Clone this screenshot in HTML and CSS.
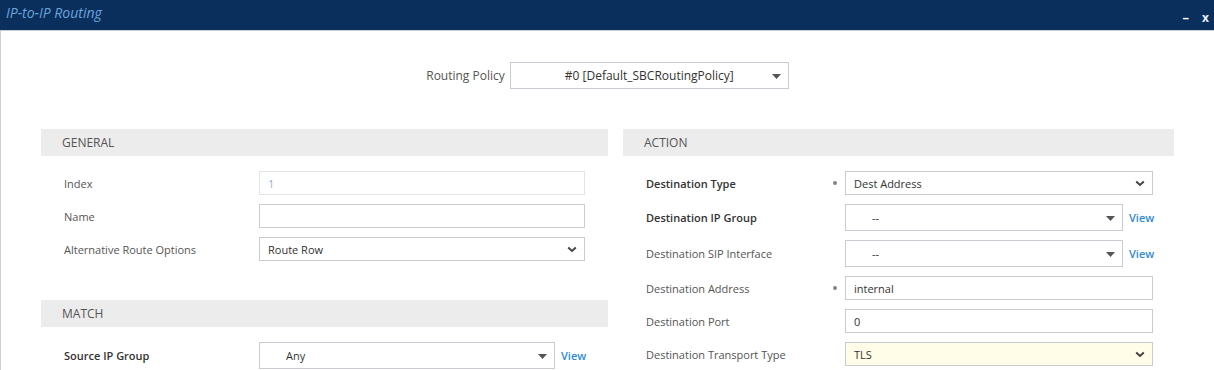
FILE: index.html
```html
<!DOCTYPE html>
<html lang="en">
<head>
  <meta charset="UTF-8" />
  <title>IP-to-IP Routing</title>
  <link rel="stylesheet" href="styles.css">
</head>
<body>

  <div class="titlebar">
    <span class="title">IP-to-IP Routing</span>
    <span class="win-btns"><span class="min">&ndash;</span><span class="close">x</span></span>
  </div>

  <div class="content">
    <div class="policy-row">
      <span class="policy-label">Routing Policy</span>
      <div class="field sel tri policy">
        <span class="val">#0 [Default_SBCRoutingPolicy]</span>
        <svg class="tri-ico" width="9" height="5" viewBox="0 0 9 5"><path d="M0 0h9L4.5 5z" fill="#555"/></svg>
      </div>
    </div>

    <div class="columns">
      <!-- levy sloupec -->
      <div class="col left">
        <div class="sec-head">GENERAL</div>
        <div class="rows">
          <div class="row">
            <span class="lbl">Index</span>
            <div class="field inp disabled w-full"><span class="val">1</span></div>
          </div>
          <div class="row">
            <span class="lbl">Name</span>
            <div class="field inp w-full"></div>
          </div>
          <div class="row">
            <span class="lbl">Alternative Route Options</span>
            <div class="field sel w-full">
              <span class="val">Route Row</span>
              <svg class="chev" width="10" height="7" viewBox="0 0 10 7"><path d="M1.2 1.5l3.8 3.5 3.8-3.5" fill="none" stroke="#444" stroke-width="2"/></svg>
            </div>
          </div>
        </div>

        <div class="sec-head match">MATCH</div>
        <div class="rows">
          <div class="row">
            <span class="lbl b">Source IP Group</span>
            <div class="field sel tri w-view tall">
              <span class="val ind">Any</span>
              <svg class="tri-ico" width="9" height="5" viewBox="0 0 9 5"><path d="M0 0h9L4.5 5z" fill="#555"/></svg>
            </div>
            <a class="view">View</a>
          </div>
        </div>
      </div>

      <!-- pravy sloupec -->
      <div class="col right">
        <div class="sec-head">ACTION</div>
        <div class="rows r">
          <div class="row">
            <span class="lbl b">Destination Type</span>
            <span class="dot"></span>
            <div class="field sel w-full">
              <span class="val">Dest Address</span>
              <svg class="chev" width="10" height="7" viewBox="0 0 10 7"><path d="M1.2 1.5l3.8 3.5 3.8-3.5" fill="none" stroke="#444" stroke-width="2"/></svg>
            </div>
          </div>
          <div class="row">
            <span class="lbl b">Destination IP Group</span>
            <span class="dot off"></span>
            <div class="field sel tri w-view tall">
              <span class="val ind">--</span>
              <svg class="tri-ico" width="9" height="5" viewBox="0 0 9 5"><path d="M0 0h9L4.5 5z" fill="#555"/></svg>
            </div>
            <a class="view">View</a>
          </div>
          <div class="row">
            <span class="lbl">Destination SIP Interface</span>
            <span class="dot off"></span>
            <div class="field sel tri w-view tall">
              <span class="val ind">--</span>
              <svg class="tri-ico" width="9" height="5" viewBox="0 0 9 5"><path d="M0 0h9L4.5 5z" fill="#555"/></svg>
            </div>
            <a class="view">View</a>
          </div>
          <div class="row">
            <span class="lbl">Destination Address</span>
            <span class="dot"></span>
            <div class="field inp w-full"><span class="val">internal</span></div>
          </div>
          <div class="row">
            <span class="lbl">Destination Port</span>
            <span class="dot off"></span>
            <div class="field inp w-full"><span class="val">0</span></div>
          </div>
          <div class="row">
            <span class="lbl">Destination Transport Type</span>
            <span class="dot off"></span>
            <div class="field sel w-full changed">
              <span class="val">TLS</span>
              <svg class="chev" width="10" height="7" viewBox="0 0 10 7"><path d="M1.2 1.5l3.8 3.5 3.8-3.5" fill="none" stroke="#444" stroke-width="2"/></svg>
            </div>
          </div>
        </div>
      </div>
    </div>
  </div>

</body>
</html>
```

FILE: styles.css
```css
body {
  margin: 0;
  padding: 0;
  font-family: 'Open Sans', sans-serif;
  font-size: 11px;
  color: #444;
  background: #fff;
  overflow: hidden;
}

.titlebar {
  height: 30px;
  background: #0b2f5c;
  border-bottom: 1px solid #c9ced6;
  display: flex;
  align-items: center;
  justify-content: space-between;
  padding: 0 0 0 6px;
}

.title {
  font-style: italic;
  font-size: 14px;
  color: #6aa3dc;
  margin-top: -6px;
}

.win-btns {
  display: flex;
  align-items: center;
  color: #fff;
  font-weight: bold;
  margin-top: 4px;
}

.min {
  font-size: 13px;
  margin-right: 13px;
}

.close {
  font-size: 12px;
  color: #e8f0ff;
  margin-right: 5px;
}

.content {
  border-left: 1px solid #c9ced6;
  height: 340px;
  padding-top: 31px;
  box-sizing: border-box;
}

.policy-row {
  display: flex;
  justify-content: center;
  align-items: center;
  gap: 5px;
}

.policy-label {
  font-size: 12px;
  color: #555;
}

.field {
  box-sizing: border-box;
  border: 1px solid #c8ccd2;
  background: #fff;
  height: 24px;
  display: flex;
  align-items: center;
  padding: 0 8px;
  font-size: 11px;
  color: #333;
  position: relative;
}

.field.policy {
  width: 279px;
  height: 27px;
  justify-content: center;
  font-size: 12px;
  color: #333;
}

.field.disabled {
  border-color: #e2e4e7;
  color: #8fb3d9;
}

.field.tall {
  height: 27px;
}

.field.changed {
  background: #fffde8;
}

.sel {
  justify-content: space-between;
}

.tri-ico {
  position: absolute;
  right: 7px;
  top: 50%;
  margin-top: -2px;
}

.chev {
  margin-right: -1px;
}

.val.ind {
  padding-left: 18px;
}

.columns {
  display: grid;
  grid-template-columns: 567px 551px;
  column-gap: 15px;
  padding-left: 40px;
  margin-top: 40px;
}

.sec-head {
  background: #ececec;
  height: 27px;
  line-height: 27px;
  padding-left: 21px;
  font-size: 12px;
  color: #555;
}

.sec-head.match {
  margin-top: 39px;
}

.rows {
  padding: 15px 23px 0 23px;
  display: flex;
  flex-direction: column;
  gap: 9px;
}

.rows.r {
  padding-right: 21px;
}

.row {
  display: flex;
  align-items: center;
  min-height: 24px;
}

.left .row .lbl {
  width: 195px;
}

.right .row .lbl {
  width: 187px;
}

.lbl {
  flex: none;
  color: #555;
}

.lbl.b {
  font-weight: 600;
  color: #333;
}

.dot {
  width: 4px;
  height: 4px;
  border-radius: 50%;
  background: #7d8593;
  margin-right: 8px;
  flex: none;
}

.dot.off {
  background: transparent;
}

.w-full {
  flex: 1;
}

.w-view {
  flex: 1;
}

.view {
  color: #2f8ad8;
  font-weight: 600;
  font-size: 11px;
  margin-left: 6px;
  width: 24px;
  cursor: pointer;
}
```
